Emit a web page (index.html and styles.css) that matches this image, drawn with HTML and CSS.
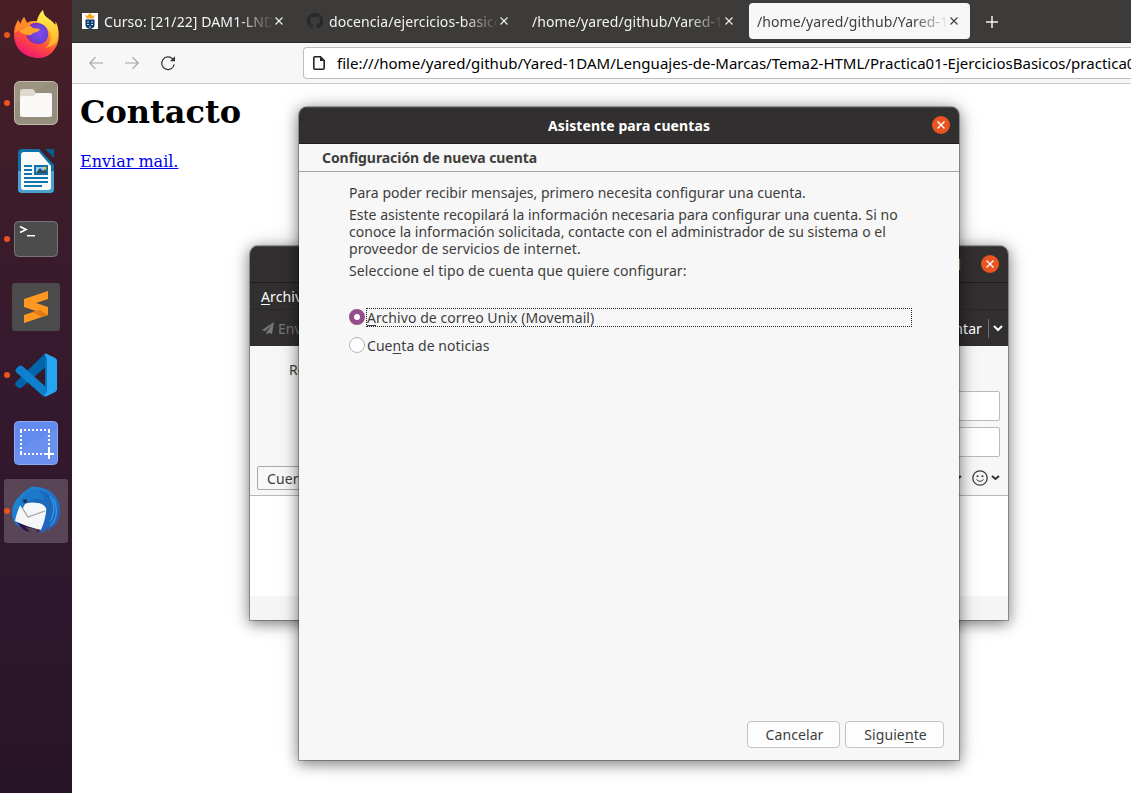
FILE: index.html
```
<!DOCTYPE html>
<html lang="es">
<head>
<meta charset="utf-8">
<title>Contacto</title>
<link rel="stylesheet" href="styles.css">
</head>
<body>
<div class="desktop">
  <nav class="dock">
    <div class="dock-item running">
      <svg width="64" height="64" viewBox="0 0 64 64">
        <defs>
          <linearGradient id="ffBody" x1=".8" y1="0" x2=".3" y2="1"><stop offset="0" stop-color="#ffe13f"/><stop offset=".35" stop-color="#ffa52b"/><stop offset=".65" stop-color="#ff4f38"/><stop offset="1" stop-color="#f0127c"/></linearGradient>
          <radialGradient id="ffGlobe" cx=".6" cy=".5" r=".6"><stop offset="0" stop-color="#8a45ee"/><stop offset=".5" stop-color="#6848dc"/><stop offset="1" stop-color="#8c28ad"/></radialGradient>
          <linearGradient id="ffFlame" x1="0" y1="0" x2="0" y2="1"><stop offset="0" stop-color="#fff44f"/><stop offset="1" stop-color="#ffab28"/></linearGradient>
        </defs>
        <g transform="translate(0 -1)">
        <path d="M10 30c0-6 3-9 4-12 1 2 2 3 3 4 0-4 3-6 3-7l3 6c3-2 6-2 10-2 1-5 3-8 6-11 0 8 9 9 12 15 1-1 1-2 0-4 4 6 5 17 2 24-4 8-10 13-18 13C20 56 10 46 10 33z" fill="url(#ffBody)"/>
        <path d="M33 20c1-5 3-9 6-12 0 8 9 9 12 15 1-1 1-2 0-4 4 5 4 14 2 20-2 4-7 6-12 7 7-4 7-14 3-19-3-3-7-5-11-7z" fill="url(#ffFlame)"/>
        <path d="M22 31c0-7 6-11 12-10 7 1 11 6 10 13-1 6-6 9-11 8-7-1-11-6-11-11z" fill="url(#ffGlobe)"/>
        <path d="M15 29c3-2 6-2 8-5 1-1 3-1 4 0 1 3 5 2 9 3-1 3-4 3-7 4-2 4-9 2-14-2z" fill="#ffa32a"/>
        <path d="M14 18c1 2 2 3 3 4 0-4 3-6 3-7l3 6c2-1 4-2 6-2-2 1-4 3-5 5-4 2-8 3-13 7 0-6 2-9 3-13z" fill="#ff8a28"/>
        </g>
      </svg>
    </div>
    <div class="dock-item running">
      <svg width="64" height="64" viewBox="0 0 64 64">
        <rect x="10.500" y="10.500" width="43" height="43" rx="5" fill="#9c9482" stroke="#c2bcab"/>
        <path d="M11 33L48 11h2q3 0 3 3v34q0 5-5 5H15q-4 0-4-5z" fill="#8e8775" opacity=".45"/>
        <path d="M16 43V21q0-3 3-3h9q2 0 3 3l2 2v20z" fill="#ddd9cf"/>
        <path d="M16 27q0-2 2-2h11l4-3h13q2 0 2 2v20q0 2-2 2H18q-2 0-2-2z" fill="#faf9f8"/>
      </svg>
    </div>
    <div class="dock-item">
      <svg width="64" height="64" viewBox="0 0 64 64">
        <path d="M18 10h17l15 16v24q0 4-4 4H18q-4 0-4-4V14q0-4 4-4z" fill="#0e72a8"/>
        <path d="M14 32h36v18q0 4-4 4H18q-4 0-4-4z" fill="#49a3d0"/>
        <path d="M20 13h15l12 14v21q0 3-3 3H20q-3 0-3-3V16q0-3 3-3z" fill="#fafafa"/>
        <path d="M41 10h8q1 0 1 1v8z" fill="#0c5c8c"/>
        <path d="M20 27h8M20 31h8M20 35h8M20 39h24M20 43h24M20 47h18" stroke="#1277ae" stroke-width="2"/>
        <rect x="31" y="27" width="12" height="8" fill="#8ecdf4" stroke="#1272a7" stroke-width="2"/>
        <path d="M32 34l4-5 3 3 2-2 2 4z" fill="#344c58"/><circle cx="41" cy="29" r="1.3" fill="#ffc519"/>
      </svg>
    </div>
    <div class="dock-item running">
      <svg width="64" height="64" viewBox="0 0 64 64">
        <rect x="10.500" y="14.500" width="43" height="35" rx="4" fill="#4c4c4c" stroke="#777"/>
        <path d="M16 19.500l6 3-6 3" fill="none" stroke="#fff" stroke-width="1.700"/><path d="M23 28.700h8" stroke="#fff" stroke-width="1.500"/>
      </svg>
    </div>
    <div class="dock-item">
      <svg width="64" height="64" viewBox="0 0 64 64">
        <rect x="8" y="8" width="48" height="48" rx="3" fill="#4b4b4b"/>
        <path d="M20 40l24-8v8l-24 8z" fill="#ff9820"/><path d="M20 24l24-8v8l-24 8z" fill="#ff9820"/><path d="M20 24v8l24 8v-8z" fill="#ff9820"/>
        <path d="M28 37l8-2 8 5-6 2z" fill="#df7c16"/>
      </svg>
    </div>
    <div class="dock-item running">
      <svg width="64" height="64" viewBox="0 0 64 64">
        <g transform="translate(1 0) scale(.913 1)">
        <path d="M43 11L12 39q-2 2 0 4l3 2q2 1 4-1l27-21z" fill="#0065a9"/>
        <path d="M12 26l3-3q2-1 4 0l27 22-3 9-31-25q-1-1 0-3z" fill="#0e81ce"/>
        <path d="M43 11q1-1 3 0l9 4q2 1 2 3v28q0 2-2 3l-9 4q-2 1-3 0l2-5V15z" fill="#25a5f2"/><path d="M44 12v40l2-4V16z" fill="#087bc4"/>
        </g>
      </svg>
    </div>
    <div class="dock-item">
      <svg width="64" height="64" viewBox="0 0 64 64">
        <rect x="10.500" y="10.500" width="43" height="43" rx="4" fill="#628aef" stroke="#8eaaf5"/>
        <path d="M11 39L53 18v31q0 4-4 4H15q-4 0-4-4z" fill="#7094ef" opacity=".6"/>
        <path d="M16 19h31M16 43h27M17 20v22M45 20v20" fill="none" stroke="#fff" stroke-width="2" stroke-dasharray="2 2"/>
        <path d="M45 38v10M40 43h10" stroke="#fff" stroke-width="2"/>
      </svg>
    </div>
    <div class="dock-item running active">
      <svg width="64" height="64" viewBox="0 0 64 64">
        <defs><linearGradient id="tb" x1="0" y1="0" x2="1" y2="1"><stop offset="0" stop-color="#1c91da"/><stop offset="1" stop-color="#2455bc"/></linearGradient></defs>
        <path d="M26 9c2-2 3-2 4-1 14-1 26 9 26 23 0 8-3 14-8 18l1-3-5 6v-4c-2 4-5 6-8 6l2-4c-9 0-18-3-23-8l7 8C12 49 8 41 8 34c0-7 3-13 8-17 2-3 6-6 10-8z" fill="url(#tb)"/>
        <path d="M13 43c8 4 17 6 24 7l-5 4 2-4-13-2 5 5c-6-1-10-5-13-10z" fill="#300d4c"/>
        <path d="M17 25c4-2 13-4 19-2 5 1 7 4 6 10-1 8-3 13-5 18-9-2-18-5-26-9 1-5 3-12 6-17z" fill="#f5f6f8"/>
        <path d="M17 27l7 11 17-6" fill="none" stroke="#a0a0a2" stroke-width="1.200"/>
        <path d="M16 26c1-8 7-15 16-15 11 0 19 9 18 22-1 8-5 12-9 16 5-13 3-24-7-25-6-1-12-1-16 3z" fill="#1c68bb"/>
        <path d="M17 28c-2-9 5-16 12-18 8 2 11 6 12 11-8-2-16-1-20 4l-2 4z" fill="#1c78c8"/>
        <circle cx="21" cy="22" r="2" fill="#203044"/>
        <path d="M50 20c4 10 3 22-4 27M46 17c6 10 4 19 0 26" fill="none" stroke="#2d9be1" stroke-width="1.300"/>
      </svg>
    </div>
  </nav>

  <main class="browser">
    <div class="tabs">
      <div class="tab">
        <svg class="favicon" width="16" height="16" viewBox="0 0 16 16"><path fill="#fff" d="M0 0h16v16H0z"/><path d="M3 1.500l2 1.500 3-3 3 3 2-1.500-1.500 4h-7z" fill="#f5a729"/><path d="M3.500 6.500h9V12q0 3-4.500 4-4.500-1-4.500-4z" fill="#0b3d70"/><path d="M5 9h2M9 9h2M5 11.500h2M9 11.500h2M7 14h2" stroke="#fff" stroke-width=".8"/></svg>
        <span class="tab-label">Curso: [21/22] DAM1-LND</span><svg class="x" viewBox="0 0 8 8"><path d="M.5.500l7 7m0-7l-7 7"/></svg>
      </div>
      <div class="tab">
        <svg class="favicon" width="16" height="16" viewBox="0 0 16 16"><path fill="#24292e" d="M8 0C3.580 0 0 3.580 0 8c0 3.540 2.290 6.530 5.470 7.590.4.070.55-.17.55-.38 0-.19-.01-.82-.01-1.490-2.010.37-2.530-.49-2.690-.94-.09-.23-.48-.94-.82-1.130-.28-.15-.68-.52-.01-.53.63-.01 1.080.58 1.230.82.72 1.210 1.870.87 2.330.66.07-.52.28-.87.51-1.070-1.780-.2-3.640-.89-3.640-3.950 0-.87.31-1.590.82-2.150-.08-.2-.36-1.020.08-2.120 0 0 .67-.21 2.200.82.640-.18 1.320-.27 2-.27s1.360.09 2 .27c1.530-1.040 2.200-.82 2.200-.82.44 1.100.16 1.920.08 2.120.51.56.82 1.270.82 2.150 0 3.070-1.870 3.750-3.650 3.950.29.25.54.73.54 1.480 0 1.070-.01 1.930-.01 2.200 0 .21.15.46.55.38A8.010 8.010 0 0 0 16 8c0-4.420-3.580-8-8-8z"/></svg>
        <span class="tab-label">docencia/ejercicios-basicos</span><svg class="x" viewBox="0 0 8 8"><path d="M.5.500l7 7m0-7l-7 7"/></svg>
      </div>
      <div class="tab"><span class="tab-label">/home/yared/github/Yared-1D</span><svg class="x" viewBox="0 0 8 8"><path d="M.5.500l7 7m0-7l-7 7"/></svg></div>
      <div class="tab selected"><span class="tab-label">/home/yared/github/Yared-1D</span><svg class="x" viewBox="0 0 8 8"><path d="M.5.500l7 7m0-7l-7 7"/></svg></div>
      <svg class="new-tab" width="12" height="12" viewBox="0 0 12 12"><path d="M6 0v12M0 6h12"/></svg>
    </div>
    <div class="navbar">
      <div class="nav-buttons">
        <svg class="off" width="14" height="14" viewBox="0 0 14 14"><path d="M14 7H.8M6.500 1.200L.8 7l5.700 5.800"/></svg>
        <svg class="off" width="14" height="14" viewBox="0 0 14 14"><path d="M0 7h13.200M7.500 1.200L13.200 7l-5.700 5.800"/></svg>
        <svg class="reload" width="16" height="16" viewBox="0 0 16 16"><path d="M12.800 4.200A6.300 6.300 0 1 0 14.200 9.300"/><path class="tip" d="M15 1.200v5h-5z"/></svg>
      </div>
      <div class="urlbar">
        <svg width="12" height="14" viewBox="0 0 12 14"><path d="M2 .8h5.500l3.700 3.700V12q0 1.200-1.200 1.200H2Q.8 13.200.8 12V2Q.8.8 2 .8z" fill="none" stroke="#222" stroke-width="1.600"/><path d="M7 1v4h4z" fill="#222"/></svg>
        <span>file:///home/yared/github/Yared-1DAM/Lenguajes-de-Marcas/Tema2-HTML/Practica01-EjerciciosBasicos/practica01</span>
      </div>
    </div>
    <div class="page"><h1>Contacto</h1><a href="#">Enviar mail.</a></div>
  </main>

  <section class="window compose">
    <div class="titlebar"><span class="title-rest">d</span><span class="close"><svg viewBox="0 0 8 8"><path d="M.5.500l7 7m0-7l-7 7"/></svg></span></div>
    <div class="menubar"><span><u>A</u>rchivo</span></div>
    <div class="toolbar">
      <span class="send"><svg width="12" height="13" viewBox="0 0 12 13"><path d="M12 0L0 8l3 1.300L10 3 4.500 10v3l2-2.300L10 12z" fill="#777"/></svg>Enviar</span>
      <span class="attach">Adjuntar<i></i><svg width="10" height="7" viewBox="0 0 10 7"><path d="M1 1l4 4 4-4" fill="none" stroke="#fff" stroke-width="2"/></svg></span>
    </div>
    <div class="headers"><span class="from">Remitente</span><div class="field"></div><div class="field"></div></div>
    <div class="format">
      <span class="select">Cuerpo</span>
      <span class="tools">
        <svg width="9" height="6" viewBox="0 0 9 6"><path d="M1 1l3.500 3L8 1" fill="none" stroke="#333" stroke-width="2"/></svg>
        <svg class="smile" width="16" height="16" viewBox="0 0 16 16"><circle cx="8" cy="8" r="7.200" fill="none" stroke="#3c3c3c" stroke-width="1.300"/><circle cx="5.500" cy="6.300" r="1" fill="#333"/><circle cx="10.500" cy="6.300" r="1" fill="#333"/><path d="M4.500 9.500q3.500 3.700 7 0" fill="none" stroke="#333"/></svg>
        <svg width="9" height="6" viewBox="0 0 9 6"><path d="M1 1l3.500 3L8 1" fill="none" stroke="#333" stroke-width="2"/></svg>
      </span>
    </div>
    <div class="editor"></div>
    <div class="status"></div>
  </section>

  <section class="window dialog">
    <div class="titlebar"><b>Asistente para cuentas</b><span class="close"><svg viewBox="0 0 8 8"><path d="M.5.500l7 7m0-7l-7 7"/></svg></span></div>
    <h2>Configuración de nueva cuenta</h2>
    <div class="wizard">
      <p class="tight">Para poder recibir mensajes, primero necesita configurar una cuenta.</p>
      <p class="tight">Este asistente recopilará la información necesaria para configurar una cuenta. Si no<br>conoce la información solicitada, contacte con el administrador de su sistema o el<br><span class="loose">proveedor de servicios de internet.</span></p>
      <p>Seleccione el tipo de cuenta que quiere configurar:</p>
      <div class="options">
        <label><span class="radio checked"></span><span class="option focused"><u>A</u>rchivo de correo Unix (Movemail)</span></label>
        <label><span class="radio"></span><span class="option">Cue<u>n</u>ta de noticias</span></label>
      </div>
    </div>
    <div class="actions"><button class="cancel">Cancelar</button><button class="next">Siguie<u>n</u>te</button></div>
  </section>
</div>
</body>
</html>
```
FILE: styles.css
```
* { box-sizing: border-box; }
body { margin: 0; }
svg { display: block; flex: none; }
u { text-decoration-thickness: 1px; text-underline-offset: 2px; text-decoration-skip-ink: none; }

.desktop { position: relative; display: flex; width: 1131px; height: 793px; overflow: hidden; background: #fff; color: #3d3d3d; font: 14px/17px "Noto Sans", sans-serif; letter-spacing: .09px; }

.dock { width: 72px; flex: none; padding: 3px 4px; display: flex; flex-direction: column; gap: 4px; background: linear-gradient(#491f26 0, #3c1c2a 25%, #35192e 50%, #2e172c 75%, #281427); }
.dock-item { position: relative; width: 64px; height: 64px; border-radius: 3px; }
.dock-item.active { background: #584657; }
.dock-item.running::before { content: ""; position: absolute; left: 0; top: 29px; width: 6px; height: 6px; border-radius: 50%; background: #e95420; }

.browser { flex: 1; min-width: 0; display: flex; flex-direction: column; }
.tabs { height: 43px; flex: none; display: flex; align-items: flex-start; gap: 4px; padding: 3px 2px; background: #3d3b39; border-bottom: 1px solid #2b2929; }
.tab { width: 221px; height: 36px; display: flex; align-items: center; padding: 0 12px 0 8px; color: #f3f3f2; border-radius: 4px; }
.tab.selected { background: #f7f7f7; color: #3d3d3d; }
.favicon { margin-right: 6px; }
.tab-label { flex: 1; min-width: 0; overflow: hidden; white-space: nowrap; padding-top: 1px; line-height: 22px; -webkit-mask-image: linear-gradient(to left, transparent 0, #000 36px); mask-image: linear-gradient(to left, transparent 0, #000 36px); }
.x { width: 8px; height: 8px; margin-left: 1px; }
.x path, .new-tab path, .close path { stroke: currentColor; stroke-width: 1.1; fill: none; }
.new-tab { margin: 13px 0 0 12px; color: #f3f3f2; }
.new-tab path { stroke-width: 1.5; }
.navbar { height: 41px; flex: none; display: flex; align-items: center; padding-left: 17px; background: #f7f7f7; border-bottom: 1px solid #c9c9c9; }
.nav-buttons { width: 214px; display: flex; align-items: center; gap: 22px; }
.nav-buttons path { fill: none; stroke: #333; stroke-width: 1.2; }
.nav-buttons .off { opacity: .42; }
.nav-buttons .reload { margin-left: -1px; }
.nav-buttons .tip { fill: #333; stroke: none; }
.urlbar { flex: 1; min-width: 0; height: 32px; display: flex; align-items: center; gap: 12px; padding-left: 9px; border: 1px solid #bdbdbd; border-right: 0; border-radius: 4px 0 0 4px; background: #fff; overflow: hidden; white-space: nowrap; color: #000; font-size: 15px; line-height: 22px; letter-spacing: .015px; }
.page { flex: 1; padding: 9px 8px; font: 16px/19px "DejaVu Serif", serif; letter-spacing: 0; color: #000; }
.page h1 { margin: 0 0 21px; font-size: 32px; line-height: 38px; }
.page a { color: #00e; }

.window { position: absolute; display: flex; flex-direction: column; background: #f7f7f7; border-radius: 8px 8px 0 0; box-shadow: 0 0 0 1px rgba(0,0,0,.28), 0 3px 14px 1px rgba(0,0,0,.45), 0 0 26px rgba(0,0,0,.12); overflow: hidden; }
.titlebar { position: relative; height: 37px; flex: none; display: flex; align-items: center; justify-content: center; background: #322f30; border-top: 1px solid #4b4949; border-bottom: 1px solid #1f1d1e; color: #fff; }
.close { position: absolute; right: 9px; top: 8px; width: 18px; height: 18px; border-radius: 50%; background: #e95420; display: flex; align-items: center; justify-content: center; }
.close svg { width: 8px; height: 8px; }
.close path { stroke-width: 1.4; }

.compose { left: 250px; top: 246px; width: 758px; height: 374px; }
.title-rest { position: absolute; right: 47px; }
.menubar { height: 27px; flex: none; padding: 5px 11px 0; background: #322f30; color: #fff; border-bottom: 1px solid #292728; line-height: 17px; }
.toolbar { height: 36px; flex: none; display: flex; align-items: center; justify-content: space-between; padding: 0 6px 0 12px; background: #322f30; color: #fff; }
.send, .attach { display: flex; align-items: center; gap: 4px; }
.attach { margin-right: -1px; }
.send { color: #777; }
.attach i { width: 1px; height: 19px; margin-left: 2px; background: #706e6f; }
.headers { height: 116px; flex: none; display: flex; flex-direction: column; align-items: flex-end; padding: 15px 8px 0; gap: 6px; }
.from { align-self: flex-start; margin: 0 0 7px 31px; }
.field { width: 640px; height: 30px; background: #fff; border: 1px solid #bbb; border-radius: 2px; }
.format { height: 34px; flex: none; display: flex; justify-content: space-between; padding: 4px 8px 0 7px; border-bottom: 1px solid #b9b9b9; }
.select { width: 120px; height: 24px; padding: 3px 9px; border: 1px solid #aaa; border-radius: 2px; }
.tools { height: 24px; display: flex; align-items: center; gap: 3px; }
.smile { margin-left: 7px; }
.editor { flex: 1; background: #fff; }
.status { height: 24px; background: #f5f5f5; }

.dialog { left: 299px; top: 107px; width: 660px; height: 653px; }
.dialog h2 { height: 28px; flex: none; margin: 0; padding: 5px 23px; border-bottom: 1px solid #a4a6a3; font-size: 14px; line-height: 17px; letter-spacing: -.07px; }
.wizard { flex: 1; padding: 12px 47px 0 50px; }
.wizard p { margin: 0 0 5px; white-space: nowrap; }
.wizard .tight { letter-spacing: .015px; }
.wizard .loose { letter-spacing: .09px; }
.options { display: flex; flex-direction: column; gap: 9px; margin-top: 29px; }
.options label { display: flex; align-items: center; height: 19px; gap: 1px; letter-spacing: .06px; }
.radio { width: 16px; height: 16px; margin-top: -2px; border: 1px solid #b5b5b5; border-radius: 50%; background: #fff; }
.radio.checked { border: 5.5px solid #924d8b; }
.option { flex: 1; height: 19px; border: 1px solid transparent; line-height: 18px; }
.option.focused { border: 1px dotted #222; }
.actions { display: flex; justify-content: flex-end; gap: 5px; padding: 0 15px 12px; }
.actions button { height: 27px; padding: 0 0 0 2px; border: 1px solid #c3c3c3; border-radius: 4px; background: #fdfdfd; color: #3d3d3d; font: inherit; letter-spacing: .1px; }
.cancel { width: 93px; }
.next { width: 99px; }
```
